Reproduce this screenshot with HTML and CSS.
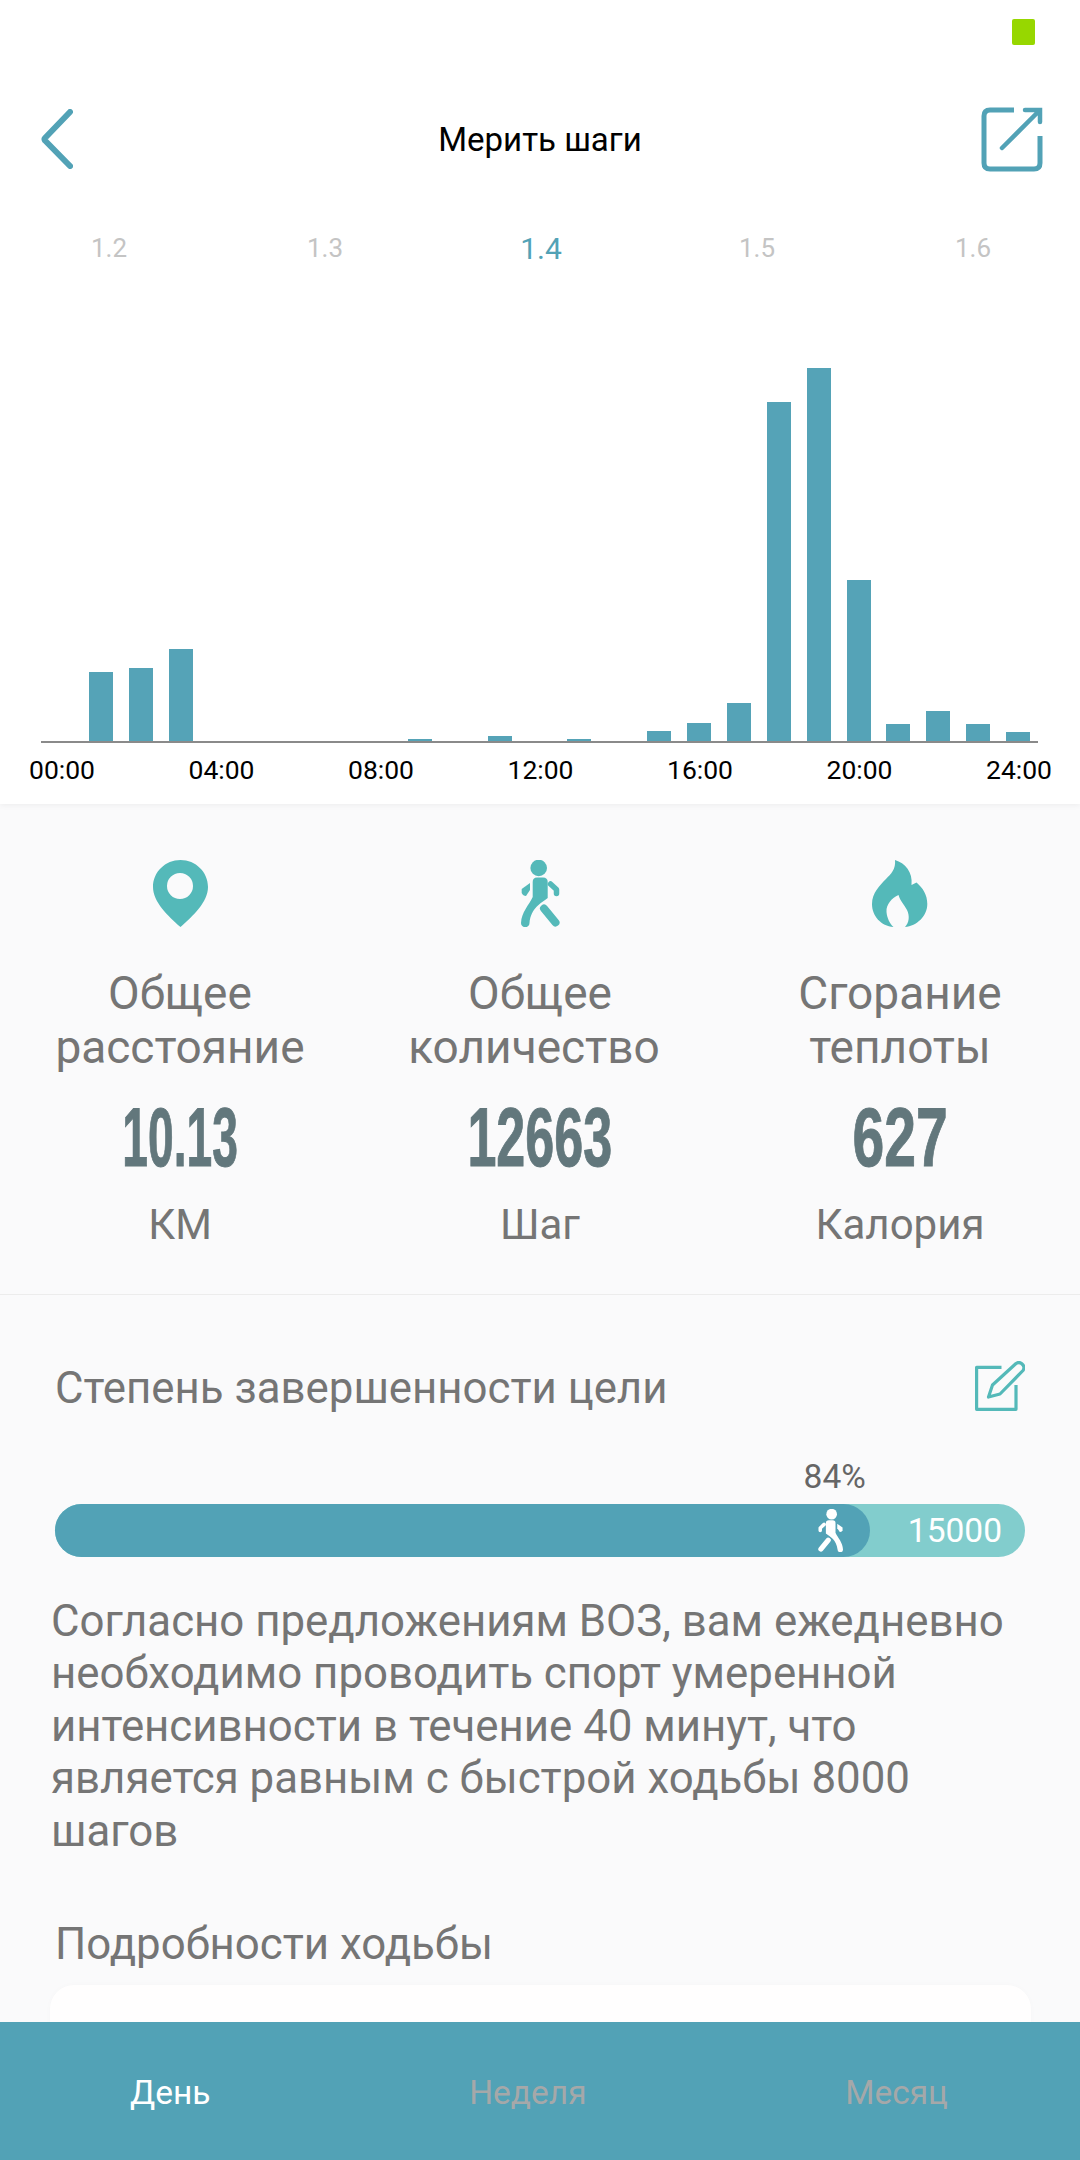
FILE: index.html
```html
<!DOCTYPE html>
<html lang="ru">
<head>
    <meta charset="UTF-8">
    <meta name="viewport" content="width=device-width, initial-scale=1.0">
    <title>Мерить шаги</title>
    <link rel="stylesheet" href="styles.css">
</head>
<body>
    <svg class="icon-defs" width="0" height="0">
        <symbol id="walker" viewBox="0 0 39 67">
            <circle cx="17.7" cy="8" r="8.3" fill="currentColor"/>
            <path fill="currentColor" d="M11.7 22Q11.7 17.5 16 17.5H22Q26.7 17.5 26.7 22V38C20 43 10 48 8.5 63A4.2 4.2 0 0 1 0 63C.5 52 8 45 11.7 37Z"/>
            <path fill="currentColor" d="M9 23V30L5 36Q2 36 .7 33V29Z"/>
            <path fill="none" stroke="currentColor" stroke-width="5.5" stroke-linecap="round" stroke-linejoin="round" d="M29.5 24L35.5 29.5V33.5"/>
            <path fill="none" stroke="currentColor" stroke-width="8" stroke-linecap="round" d="M23 48.5L34.5 62.5"/>
        </symbol>
    </svg>

    <div class="page">
        <div class="content">
            <div class="chart-card">
                <div class="status-bar"><span class="battery"></span></div>
                <div class="topbar">
                    <svg class="icon-back" viewBox="0 0 32 60" width="32" height="60">
                        <path d="M29 3L4 29Q3 30 4 31.500L29 57" fill="none" stroke="#52a2b6" stroke-width="6" stroke-linecap="round" stroke-linejoin="round"/>
                    </svg>
                    <h1>Мерить шаги</h1>
                    <svg class="icon-share" viewBox="0 0 62 65" width="62" height="65">
                        <path d="M33 3H9Q3 3 3 9V56Q3 62 9 62H53Q59 62 59 56V29" fill="none" stroke="#52a2b6" stroke-width="5"/>
                        <path d="M21 41L58 4M44 3H59V15" fill="none" stroke="#52a2b6" stroke-width="4.500" stroke-linecap="round"/>
                    </svg>
                </div>
                <div class="dates">
                    <span>1.2</span>
                    <span>1.3</span>
                    <span class="current">1.4</span>
                    <span>1.5</span>
                    <span>1.6</span>
                </div>
                <div class="bars" id="bars"></div>
                <div class="hours">
                    <span>00:00</span>
                    <span>04:00</span>
                    <span>08:00</span>
                    <span>12:00</span>
                    <span>16:00</span>
                    <span>20:00</span>
                    <span>24:00</span>
                </div>
            </div>

            <div class="stats">
                <div class="stat">
                    <svg class="stat-icon" viewBox="0 0 55 67" width="55" height="67">
                        <path fill="#54b9b9" fill-rule="evenodd" d="M27.500 0C42.700 0 55 12 55 27C55 42 40 56 27.500 67C15 56 0 42 0 27C0 12 12.300 0 27.500 0ZM27 13A13 13 0 1 0 27 39A13 13 0 1 0 27 13Z"/>
                    </svg>
                    <div class="stat-label">Общее<br>расстояние</div>
                    <div class="stat-number"><span class="tight">10.13</span></div>
                    <div class="stat-unit">КМ</div>
                </div>
                <div class="stat">
                    <svg class="stat-icon walker-teal" width="39" height="67"><use href="#walker"/></svg>
                    <div class="stat-label">Общее<br><span class="shifted">количество</span></div>
                    <div class="stat-number"><span>12663</span></div>
                    <div class="stat-unit">Шаг</div>
                </div>
                <div class="stat">
                    <svg class="stat-icon" viewBox="0 0 56 67" width="56" height="67">
                        <path fill="#54b9b9" d="M23 0C33 3 41 12 39.500 25L44.500 22.500C51 28 55.300 35 55.300 44C55.300 56 45 66 33 67C37 63 38 56 35 50C32 44 28 41 26.500 35C20 38 14 44 14.500 52C15 58 18 64 21.500 67C9 66 0 56 0 44C0 33 8 25 14 19C19 14 24 9 23 0Z"/>
                    </svg>
                    <div class="stat-label">Сгорание<br>теплоты</div>
                    <div class="stat-number"><span class="wide">627</span></div>
                    <div class="stat-unit">Калория</div>
                </div>
            </div>

            <div class="goal">
                <div class="goal-header">
                    <span>Степень завершенности цели</span>
                    <svg viewBox="0 0 50 50" width="50" height="50">
                        <path d="M26.500 6.300H1.600V48.300H41V24" fill="none" stroke="#54b9b9" stroke-width="3.200" stroke-linejoin="round"/>
                        <path d="M13.500 36L17.500 24L41 2.500Q44 .5 46.500 2.500L48 4Q50 7 48 9.500L25 33Z" fill="none" stroke="#54b9b9" stroke-width="3.200" stroke-linejoin="round"/>
                    </svg>
                </div>
                <div class="percent" style="width: 84%">84%</div>
                <div class="progress">
                    <div class="progress-fill" style="width: 84%">
                        <svg class="walker-white" width="27" height="43"><use href="#walker"/></svg>
                    </div>
                    <span class="progress-target">15000</span>
                </div>
                <p class="advice">Согласно предложениям ВОЗ, вам ежедневно необходимо проводить спорт умеренной интенсивности в течение 40 минут, что является равным с быстрой ходьбы 8000 шагов</p>
                <div class="details-title">Подробности ходьбы</div>
                <div class="details-card"></div>
            </div>
        </div>

        <div class="tabs">
            <span class="active">День</span>
            <span>Неделя</span>
            <span>Месяц</span>
        </div>
    </div>

    <script>
        // steps per hour, as bar heights in px
        const heights = [0, 69, 73, 92, 0, 0, 0, 0, 0, 2, 0, 5, 0, 2, 0, 10, 18, 38, 339, 373, 161, 17, 30, 17, 9];
        const bars = document.getElementById('bars');

        heights.forEach(h => {
            const slot = document.createElement('div');
            slot.className = 'bar-slot';
            const bar = document.createElement('div');
            bar.className = 'bar';
            bar.style.height = h + 'px';
            slot.appendChild(bar);
            bars.appendChild(slot);
        });
    </script>
</body>
</html>
```

FILE: styles.css
```css
* {
    box-sizing: border-box;
}
body {
    font-family: Roboto, "Liberation Sans", sans-serif;
    margin: 0;
    background-color: #fafafb;
    color: #757575;
}
.icon-defs {
    position: absolute;
}
.page {
    width: 1080px;
    height: 2160px;
    display: flex;
    flex-direction: column;
    overflow: hidden;
}
.content {
    height: 2022px;
    overflow: hidden;
}
.chart-card {
    height: 804px;
    background: white;
    box-shadow: 0 1px 6px rgba(0,0,0,0.06);
}
.status-bar {
    height: 64px;
    padding: 19px 45px 0 0;
    display: flex;
    justify-content: flex-end;
}
.battery {
    width: 23px;
    height: 26px;
    background: #97d700;
    border-radius: 2px;
}
.topbar {
    height: 150px;
    padding: 0 37px;
    display: grid;
    grid-template-columns: 1fr auto 1fr;
    align-items: center;
}
.icon-back {
    margin-left: 4px;
}
.icon-share {
    justify-self: end;
}
.topbar h1 {
    margin: 0;
    font-size: 33px;
    font-weight: 400;
    color: #000;
}
.dates {
    height: 66px;
    padding: 2px 0 0 1px;
    display: grid;
    grid-template-columns: repeat(5, 216px);
    align-items: center;
    justify-items: center;
    font-size: 26px;
    color: #c4c4c4;
}
.dates .current {
    font-size: 30px;
    color: #52a2b6;
}
.bars {
    height: 463px;
    margin: 0 42px 0 41px;
    display: grid;
    grid-template-columns: repeat(25, 1fr);
    border-bottom: 2px solid #8a8a8a;
}
.bar-slot {
    display: flex;
    align-items: flex-end;
    justify-content: center;
}
.bar {
    width: 24px;
    background: #55a3b7;
}
.hours {
    padding: 12px 28px 0 29px;
    display: flex;
    justify-content: space-between;
    font-size: 26.5px;
    line-height: 30px;
    color: #000;
}
.stats {
    height: 491px;
    padding-top: 56px;
    display: grid;
    grid-template-columns: repeat(3, 360px);
    border-bottom: 1px solid #ececec;
}
.stat {
    display: flex;
    flex-direction: column;
    align-items: center;
    text-align: center;
}
.stat-icon {
    display: block;
}
.walker-teal {
    color: #54b9b9;
}
.stat-label {
    margin-top: 39px;
    font-size: 46px;
    line-height: 54px;
    white-space: nowrap;
}
.shifted {
    margin-right: 12px;
}
.stat-number {
    margin-top: 21px;
    height: 84px;
    font-family: "Liberation Sans Narrow", "Liberation Sans", sans-serif;
    font-weight: 700;
    font-size: 84px;
    line-height: 84px;
    color: #62777c;
    -webkit-text-stroke: 1px #62777c;
}
.stat-number span {
    display: inline-block;
    transform: scaleX(0.62);
}
.stat-number .tight {
    transform: scaleX(0.55);
}
.stat-number .wide {
    transform: scaleX(0.68);
}
.stat-unit {
    margin-top: 19px;
    font-size: 42px;
    line-height: 54px;
}
.goal {
    padding: 66px 55px 0 55px;
}
.goal-header {
    display: flex;
    align-items: center;
    justify-content: space-between;
    font-size: 43.8px;
    line-height: 46px;
}
.goal-header span {
    padding-top: 4px;
}
.goal-header svg {
    display: block;
}
.percent {
    margin-top: 48px;
    padding-right: 4px;
    font-size: 33.5px;
    line-height: 36px;
    text-align: right;
    color: #666;
}
.progress {
    height: 53px;
    margin-top: 9px;
    display: flex;
    align-items: center;
    background: #82cdcd;
    border-radius: 27px;
}
.progress-fill {
    height: 53px;
    padding-right: 26px;
    display: flex;
    align-items: center;
    justify-content: flex-end;
    background: #52a2b6;
    border-radius: 27px;
}
.walker-white {
    color: white;
    transform: scaleX(-1);
}
.progress-target {
    margin-left: auto;
    padding-right: 23px;
    font-size: 33.5px;
    color: white;
}
.advice {
    width: 965px;
    margin: 38px 0 0 -4px;
    font-size: 43.8px;
    line-height: 52.4px;
}
.details-title {
    margin-top: 60px;
    font-size: 43.8px;
    line-height: 54px;
}
.details-card {
    height: 200px;
    margin: 14px -6px 0 -5px;
    background: #fffefe;
    border-radius: 24px;
    box-shadow: 0 0 6px rgba(0,0,0,0.02);
}
.tabs {
    height: 138px;
    padding: 2px 132px 0 130px;
    display: flex;
    align-items: center;
    justify-content: space-between;
    background: #52a2b6;
    font-size: 33.5px;
    color: #a5a8a9;
}
.tabs .active {
    color: white;
}
```
